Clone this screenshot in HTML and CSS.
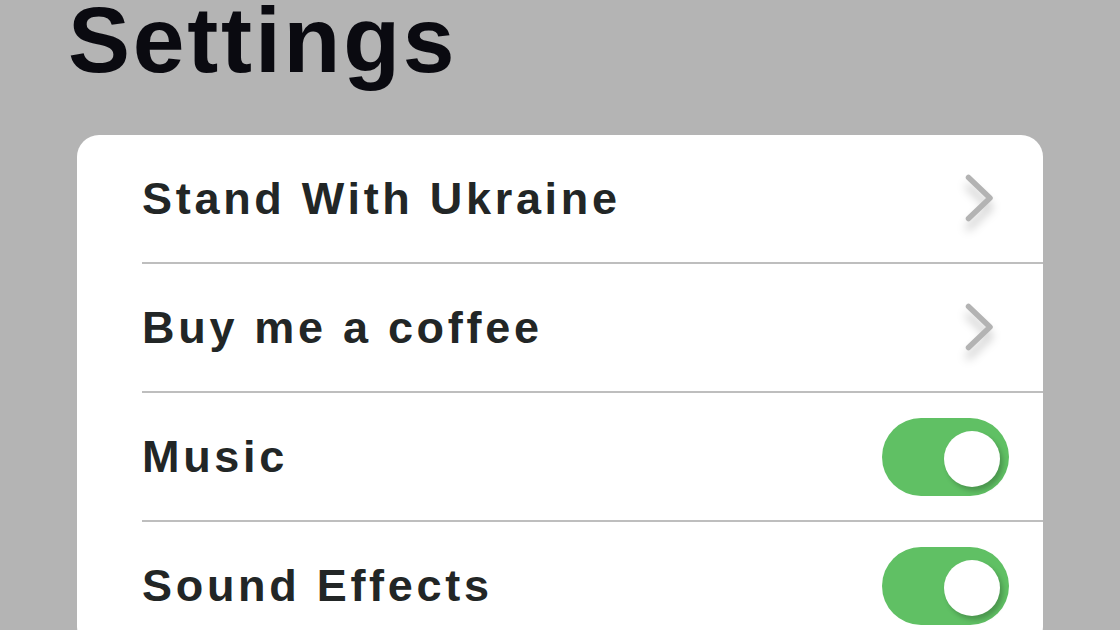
FILE: index.html
```html
<!DOCTYPE html>
<html lang="en">
  <head>
    <meta charset="UTF-8" />
    <meta name="viewport" content="width=device-width, initial-scale=1.0" />
    <title>Settings</title>
    <link rel="stylesheet" href="styles.css">
  </head>
  <body>
    <h1 class="title">Settings</h1>
    <div class="card">
      <div class="row">
        <span class="label">Stand With Ukraine</span>
        <svg class="chevron" viewBox="0 0 30 50" width="30" height="50">
          <polyline points="3.5,3.5 25,24 3.5,44.5" />
        </svg>
      </div>
      <div class="row">
        <span class="label">Buy me a coffee</span>
        <svg class="chevron" viewBox="0 0 30 50" width="30" height="50">
          <polyline points="3.5,3.5 25,24 3.5,44.5" />
        </svg>
      </div>
      <div class="row">
        <span class="label">Music</span>
        <div class="toggle on"><div class="knob"></div></div>
      </div>
      <div class="row">
        <span class="label">Sound Effects</span>
        <div class="toggle on"><div class="knob"></div></div>
      </div>
    </div>
  </body>
</html>
```

FILE: styles.css
```css
body {
  margin: 0;
  padding: 0;
  background-color: #b4b4b4;
  font-family: "Liberation Sans", Arial, sans-serif;
  overflow: hidden;
}
.title {
  margin: 0 0 55px 68px;
  font-size: 93px;
  line-height: 80px;
  font-weight: bold;
  letter-spacing: 2.8px;
  color: #0a0a10;
}
.card {
  margin-left: 77px;
  width: 966px;
  background-color: #ffffff;
  border-radius: 22px;
  overflow: hidden;
}
.row {
  display: flex;
  align-items: center;
  justify-content: space-between;
  height: 127px;
  margin-left: 65px;
  border-bottom: 2px solid #bebebe;
}
.row:last-child {
  border-bottom: none;
}
.label {
  font-size: 45px;
  font-weight: bold;
  letter-spacing: 3.7px;
  color: #222626;
}
.chevron {
  margin-right: 48px;
  filter: drop-shadow(0 9px 5px rgba(0, 0, 0, 0.22));
}
.chevron polyline {
  fill: none;
  stroke: #b3b3b3;
  stroke-width: 5.5;
  stroke-linecap: round;
  stroke-linejoin: round;
}
.toggle {
  position: relative;
  width: 127px;
  height: 78px;
  margin-right: 34px;
  border-radius: 39px;
  background-color: #dcdcdc;
}
.toggle.on {
  background-color: #60c064;
}
.knob {
  position: absolute;
  top: 13px;
  right: 9px;
  width: 56px;
  height: 56px;
  border-radius: 50%;
  background-color: #ffffff;
  box-shadow: 3px 4px 5px rgba(0, 0, 0, 0.22);
}
```
